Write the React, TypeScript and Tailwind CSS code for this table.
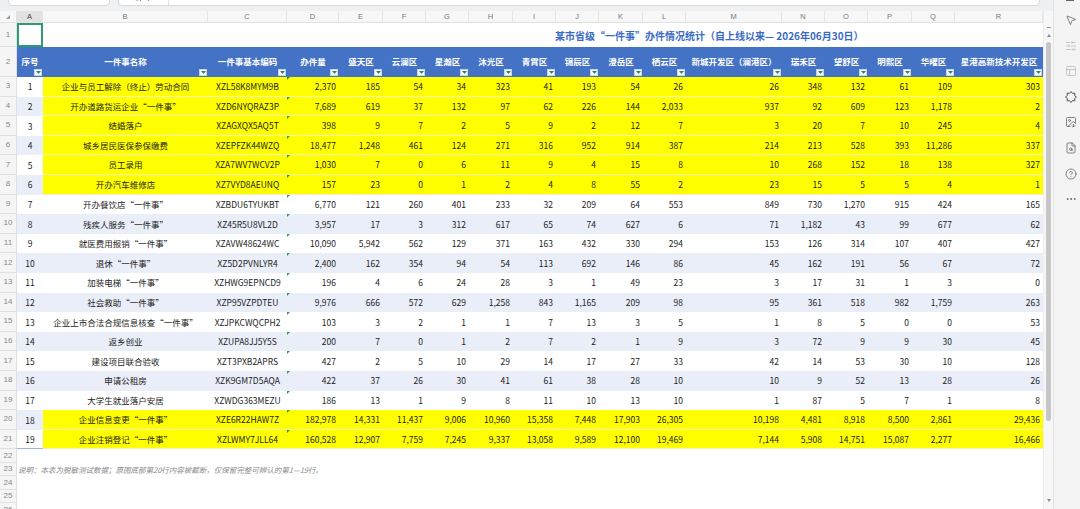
import React from 'react';
import {
  MousePointer2,
  SlidersHorizontal,
  PanelsTopLeft,
  ImageDown,
  FileSearch,
  CircleHelp,
  Ellipsis,
  Search,
} from 'lucide-react';

const COLS =
  'grid grid-cols-[17px_26px_165px_79px_52px_44px_43px_43px_44px_43px_43px_44px_43px_96px_43px_43px_44px_43px_88px]';

const LETTERS = ['A', 'B', 'C', 'D', 'E', 'F', 'G', 'H', 'I', 'J', 'K', 'L', 'M', 'N', 'O', 'P', 'Q', 'R'];

const HEADERS = [
  '序号',
  '一件事名称',
  '一件事基本编码',
  '办件量',
  '盛天区',
  '云澜区',
  '星瀚区',
  '沐光区',
  '青霄区',
  '锦辰区',
  '澄岳区',
  '栖云区',
  '新城开发区（澜港区）',
  '瑞禾区',
  '望舒区',
  '明熙区',
  '华曜区',
  '星港高新技术开发区',
];

type Row = { name: string; code: string; vals: string[]; hl: boolean };

const rows: Row[] = [
  { name: '企业与员工解除（终止）劳动合同', code: 'XZL58K8MYM9B', hl: true, vals: ['2,370', '185', '54', '34', '323', '41', '193', '54', '26', '26', '348', '132', '61', '109', '303'] },
  { name: '开办道路货运企业“一件事”', code: 'XZD6NYQRAZ3P', hl: true, vals: ['7,689', '619', '37', '132', '97', '62', '226', '144', '2,033', '937', '92', '609', '123', '1,178', '2'] },
  { name: '结婚落户', code: 'XZAGXQX5AQ5T', hl: true, vals: ['398', '9', '7', '2', '5', '9', '2', '12', '7', '3', '20', '7', '10', '245', '4'] },
  { name: '城乡居民医保参保缴费', code: 'XZEPFZK44WZQ', hl: true, vals: ['18,477', '1,248', '461', '124', '271', '316', '952', '914', '387', '214', '213', '528', '393', '11,286', '337'] },
  { name: '员工录用', code: 'XZA7WV7WCV2P', hl: true, vals: ['1,030', '7', '0', '6', '11', '9', '4', '15', '8', '10', '268', '152', '18', '138', '327'] },
  { name: '开办汽车维修店', code: 'XZ7VYD8AEUNQ', hl: true, vals: ['157', '23', '0', '1', '2', '4', '8', '55', '2', '23', '15', '5', '5', '4', '1'] },
  { name: '开办餐饮店“一件事”', code: 'XZBDU6TYUKBT', hl: false, vals: ['6,770', '121', '260', '401', '233', '32', '209', '64', '553', '849', '730', '1,270', '915', '424', '165'] },
  { name: '残疾人服务“一件事”', code: 'XZ45R5U8VL2D', hl: false, vals: ['3,957', '17', '3', '312', '617', '65', '74', '627', '6', '71', '1,182', '43', '99', '677', '62'] },
  { name: '就医费用报销“一件事”', code: 'XZAVW48624WC', hl: false, vals: ['10,090', '5,942', '562', '129', '371', '163', '432', '330', '294', '153', '126', '314', '107', '407', '427'] },
  { name: '退休“一件事”', code: 'XZ5D2PVNLYR4', hl: false, vals: ['2,400', '162', '354', '94', '54', '113', '692', '146', '86', '45', '162', '191', '56', '67', '72'] },
  { name: '加装电梯“一件事”', code: 'XZHWG9EPNCD9', hl: false, vals: ['196', '4', '6', '24', '28', '3', '1', '49', '23', '3', '17', '31', '1', '3', '0'] },
  { name: '社会救助“一件事”', code: 'XZP95VZPDTEU', hl: false, vals: ['9,976', '666', '572', '629', '1,258', '843', '1,165', '209', '98', '95', '361', '518', '982', '1,759', '263'] },
  { name: '企业上市合法合规信息核查“一件事”', code: 'XZJPKCWQCPH2', hl: false, vals: ['103', '3', '2', '1', '1', '7', '13', '3', '5', '1', '8', '5', '0', '0', '53'] },
  { name: '返乡创业', code: 'XZUPA8JJ5Y5S', hl: false, vals: ['200', '7', '0', '1', '2', '7', '2', '1', '9', '3', '72', '9', '9', '30', '45'] },
  { name: '建设项目联合验收', code: 'XZT3PXB2APRS', hl: false, vals: ['427', '2', '5', '10', '29', '14', '17', '27', '33', '42', '14', '53', '30', '10', '128'] },
  { name: '申请公租房', code: 'XZK9GM7D5AQA', hl: false, vals: ['422', '37', '26', '30', '41', '61', '38', '28', '10', '10', '9', '52', '13', '28', '26'] },
  { name: '大学生就业落户安居', code: 'XZWDG363MEZU', hl: false, vals: ['186', '13', '1', '9', '8', '11', '10', '13', '10', '1', '87', '5', '7', '1', '8'] },
  { name: '企业信息变更“一件事”', code: 'XZE6R22HAW7Z', hl: true, vals: ['182,978', '14,331', '11,437', '9,006', '10,960', '15,358', '7,448', '17,903', '26,305', '10,198', '4,481', '8,918', '8,500', '2,861', '29,436'] },
  { name: '企业注销登记“一件事”', code: 'XZLWMY7JLL64', hl: true, vals: ['160,528', '12,907', '7,759', '7,245', '9,337', '13,058', '9,589', '12,100', '19,469', '7,144', '5,908', '14,751', '15,087', '2,277', '16,466'] },
];

function RowHead({ n }: { n: number }) {
  return (
    <div className="bg-[#f5f5f5] border-r border-b border-[#e0e0e0] flex items-center justify-center text-[8px] text-[#888] font-['Liberation_Sans',sans-serif]">
      {n}
    </div>
  );
}

function FilterBtn() {
  return (
    <span className="absolute right-[1px] bottom-[1px] w-[8px] h-[7px] bg-white border border-[#c9d3e6] flex items-center justify-center">
      <svg width="5" height="3" viewBox="0 0 5 3">
        <polygon points="0,0 5,0 2.5,3" fill="#1f8a78" />
      </svg>
    </span>
  );
}

function StarIcon() {
  return (
    <svg width="12" height="12" viewBox="0 0 12 12" fill="none" stroke="currentColor" strokeWidth="1" strokeLinejoin="round">
      <polygon points="11.5,6 9.6,7.49 9.89,9.89 7.49,9.6 6,11.5 4.51,9.6 2.11,9.89 2.4,7.49 0.5,6 2.4,4.51 2.11,2.11 4.51,2.4 6,0.5 7.49,2.4 9.89,2.11 9.6,4.51" />
    </svg>
  );
}

function DataRow({ r, i }: { r: Row; i: number }) {
  const seq = i + 1;
  const stripe = seq % 2 === 0 ? 'bg-[#e9eef9]' : 'bg-white';
  const body = r.hl ? 'bg-[#ffff00] border-b border-[#f3f3b8]' : stripe;
  const last = i === rows.length - 1;
  const bottom = last ? ' border-b border-[#9fb4dd]' : '';
  return (
    <div className={`${COLS} h-[19.6px] shrink-0 text-[8.5px] text-[#1c1c1c]`}>
      <RowHead n={i + 3} />
      <div className={`${stripe}${bottom} flex items-center justify-center`}>{seq}</div>
      <div className={`${body}${bottom} flex items-center justify-center whitespace-nowrap`}>{r.name}</div>
      <div className={`${body}${bottom} flex items-center justify-center whitespace-nowrap`}>{r.code}</div>
      {r.vals.map((v, j) => (
        <div
          key={j}
          className={`${body}${bottom} relative flex items-center justify-end pr-[3px] whitespace-nowrap`}
        >
          {j === 0 && (
            <span className="absolute left-0 top-0 w-0 h-0 border-t-[3px] border-t-[#2e9b4f] border-r-[3px] border-r-transparent" />
          )}
          {v}
        </div>
      ))}
    </div>
  );
}

function EmptyRow({ n, children }: { n: number; children?: React.ReactNode }) {
  return (
    <div className={`${COLS} h-[13.5px] shrink-0`}>
      <RowHead n={n} />
      <div className="col-span-18 relative bg-white">{children}</div>
    </div>
  );
}

export default function App() {
  return (
    <div className="w-[1080px] h-[509px] overflow-hidden flex bg-white font-['Noto_Sans_CJK_SC','Noto_Sans',sans-serif]">
      <div className="w-[1053px] flex flex-col">
        {/* formula bar (cut) */}
        <div className="h-[11px] shrink-0 bg-[#eef0f2] flex gap-[8px] pl-[8px] overflow-hidden">
          <div className="w-[102px] h-[18px] -mt-[12px] bg-white border border-[#dadada] rounded-[4px] flex items-center justify-center text-[9px] text-[#333] font-['Liberation_Sans',sans-serif]">
            A1
          </div>
          <div className="w-[922px] h-[18px] -mt-[12px] bg-white border border-[#dadada] rounded-[4px] flex items-center">
            <div className="w-[50px] h-full border-r border-[#e2e2e2] flex items-center justify-center gap-[6px] text-[#555]">
              <Search size={9} strokeWidth={2} />
              <span className="text-[9px] italic font-['Liberation_Serif',serif]">fx</span>
            </div>
            <div className="flex-1" />
            <span className="text-[9px] text-[#3a6bc4] pr-[6px]">⌄</span>
          </div>
        </div>
        <div className="flex flex-1 min-h-0">
          <div className="w-[1043px] flex flex-col overflow-hidden">
            {/* column letters */}
            <div className={`${COLS} h-[12px] shrink-0 bg-[#f7f7f7] border-b border-[#e2e2e2] text-[7.5px] text-[#777] font-['Liberation_Sans',sans-serif]`}>
              <div className="relative border-r border-[#e2e2e2]">
                <span className="absolute left-[6px] bottom-[3px] w-0 h-0 border-b-[4px] border-b-[#9a9a9a] border-l-[4px] border-l-transparent" />
              </div>
              {LETTERS.map((l, i) => (
                <div
                  key={l}
                  className={`flex items-center justify-center border-r border-[#e6e6e6] ${i === 0 ? 'bg-[#e2e2e2] text-[#444]' : ''}`}
                >
                  {l}
                </div>
              ))}
            </div>
            {/* row 1: title */}
            <div className={`${COLS} h-[24px] shrink-0`}>
              <RowHead n={1} />
              <div className="border-[2px] border-[#2e9c72] bg-white" />
              <div className="col-span-17 flex items-center pl-[512px] text-[10px] font-bold text-[#3a6bc4] whitespace-nowrap">
                某市省级“一件事”办件情况统计（自上线以来— 2026年06月30日）
              </div>
            </div>
            {/* row 2: header */}
            <div className={`${COLS} h-[30px] shrink-0`}>
              <RowHead n={2} />
              {HEADERS.map((h) => (
                <div
                  key={h}
                  className="relative bg-[#4472c4] text-white font-bold text-[8.5px] flex items-center justify-center whitespace-nowrap pb-[1px]"
                >
                  {h}
                  <FilterBtn />
                </div>
              ))}
            </div>
            {rows.map((r, i) => (
              <DataRow key={r.code} r={r} i={i} />
            ))}
            <EmptyRow n={22} />
            <EmptyRow n={23}>
              <span className="absolute left-[1px] top-0 h-full flex items-center text-[7.5px] italic text-[#8a8a8a] whitespace-nowrap">
                说明：本表为脱敏测试数据；原图底部第20行内容被截断，仅保留完整可辨认的第1—19行。
              </span>
            </EmptyRow>
            <EmptyRow n={24} />
            <EmptyRow n={25} />
            <EmptyRow n={26} />
          </div>
          {/* vertical scrollbar */}
          <div className="w-[10px] flex flex-col items-center bg-[#f7f7f7] border-l border-[#ececec]">
            <div className="h-[12px] w-full bg-[#f7f7f7]" />
            <div className="h-[4px]" />
            <div className="w-[4px] h-[1px] bg-[#9a9a9a]" />
            <div className="mt-[6px] w-0 h-0 border-b-[3px] border-b-[#8a8a8a] border-l-[2px] border-l-transparent border-r-[2px] border-r-transparent" />
            <div className="mt-[5px] w-[5px] h-[379px] rounded-full bg-[#c6c6c6]" />
            <div className="flex-1" />
            <div className="mb-[7px] w-0 h-0 border-t-[3px] border-t-[#8a8a8a] border-l-[2px] border-l-transparent border-r-[2px] border-r-transparent" />
          </div>
        </div>
      </div>
      {/* right side toolbar */}
      <div className="w-[27px] bg-[#f4f4f4] border-l border-[#e3e3e3] flex flex-col items-start pl-[11px]">
        <div className="w-[8px] h-[1px] bg-[#666] ml-[1px]" />
        <div className="flex flex-col gap-[13.6px] mt-[13px] text-[#555]">
          <MousePointer2 size={12} strokeWidth={1.4} />
          <SlidersHorizontal size={12} strokeWidth={1.4} className="text-[#b5b5b5]" />
          <PanelsTopLeft size={12} strokeWidth={1.4} className="text-[#b5b5b5]" />
          <StarIcon />
          <ImageDown size={12} strokeWidth={1.4} />
          <FileSearch size={12} strokeWidth={1.4} />
          <CircleHelp size={12} strokeWidth={1.4} />
          <Ellipsis size={12} strokeWidth={1.6} />
        </div>
      </div>
    </div>
  );
}
